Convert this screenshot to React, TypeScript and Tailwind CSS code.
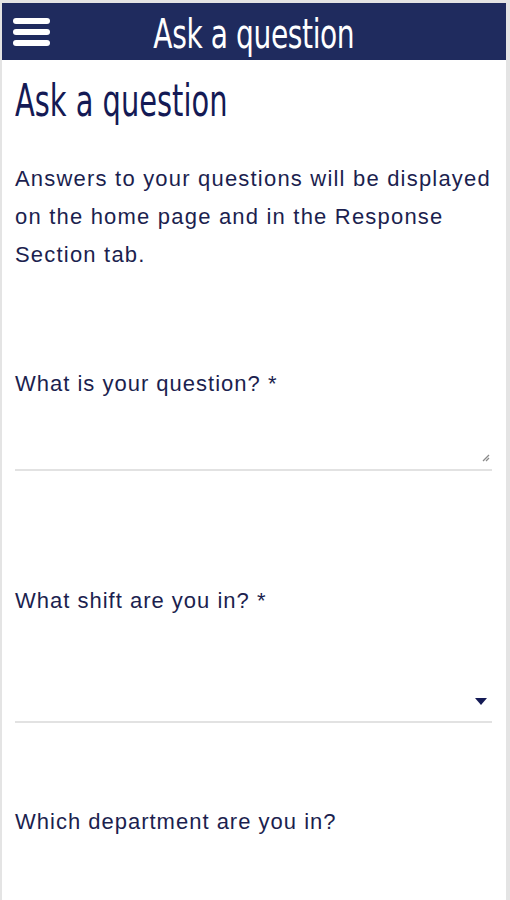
export default function App() {
  const heading = { fontFamily: '"Liberation Sans Narrow", "DejaVu Sans Condensed", "Roboto", sans-serif' };
  const body = { fontFamily: '"Liberation Sans", Arial, sans-serif' };

  return (
    <div className="w-[510px] h-[900px] bg-[#e4e4e4] pt-[3px] pl-[2px] pr-[4px] overflow-hidden">
      <div className="h-full bg-white">
        {/* header bar */}
        <div className="relative h-[57px] bg-[#1f2b5e] flex items-center justify-center">
          <div className="absolute left-[11px] top-[15px] flex flex-col gap-[5px]">
            <span className="block w-[37px] h-[6px] rounded-full bg-white" />
            <span className="block w-[37px] h-[6px] rounded-full bg-white" />
            <span className="block w-[37px] h-[6px] rounded-full bg-white" />
          </div>
          <h1 style={heading} className="text-white text-[40px] leading-none tracking-[-0.5px] scale-x-[0.78] mt-[4px]">
            Ask a question
          </h1>
        </div>

        <div className="pl-[13px] pr-[14px]" style={body}>
          <h2 style={heading} className="text-[#141a55] text-[44px] leading-none mt-[19px] origin-left scale-x-[0.73]">
            Ask a question
          </h2>

          <p className="text-[#1c1f4f] text-[22px] tracking-[1.2px] leading-[38px] mt-[37px]">
            Answers to your questions will be displayed on the home page and in the Response Section tab.
          </p>

          {/* question */}
          <label className="block text-[#1c1f4f] text-[22px] tracking-[1px] leading-[28px] mt-[96px]">
            What is your question? *
          </label>
          <div className="relative h-[73px] border-b-2 border-[#e2e2e2]">
            <svg className="absolute right-[2px] bottom-[7px]" width="9" height="9" viewBox="0 0 9 9">
              <path d="M8 2 L2 8 M8 5 L5 8" stroke="#8a8a8a" strokeWidth="1.3" />
            </svg>
          </div>

          {/* shift */}
          <label className="block text-[#1c1f4f] text-[22px] tracking-[1px] leading-[28px] mt-[116px]">
            What shift are you in? *
          </label>
          <div className="relative h-[108px] border-b-2 border-[#e2e2e2]">
            <svg className="absolute right-[5px] bottom-[16px]" width="12" height="7" viewBox="0 0 12 7">
              <path d="M0 0 H12 L6 7 Z" fill="#141a55" />
            </svg>
          </div>

          {/* department */}
          <label className="block text-[#1c1f4f] text-[22px] tracking-[1px] leading-[28px] mt-[85px]">
            Which department are you in?
          </label>
        </div>
      </div>
    </div>
  );
}
